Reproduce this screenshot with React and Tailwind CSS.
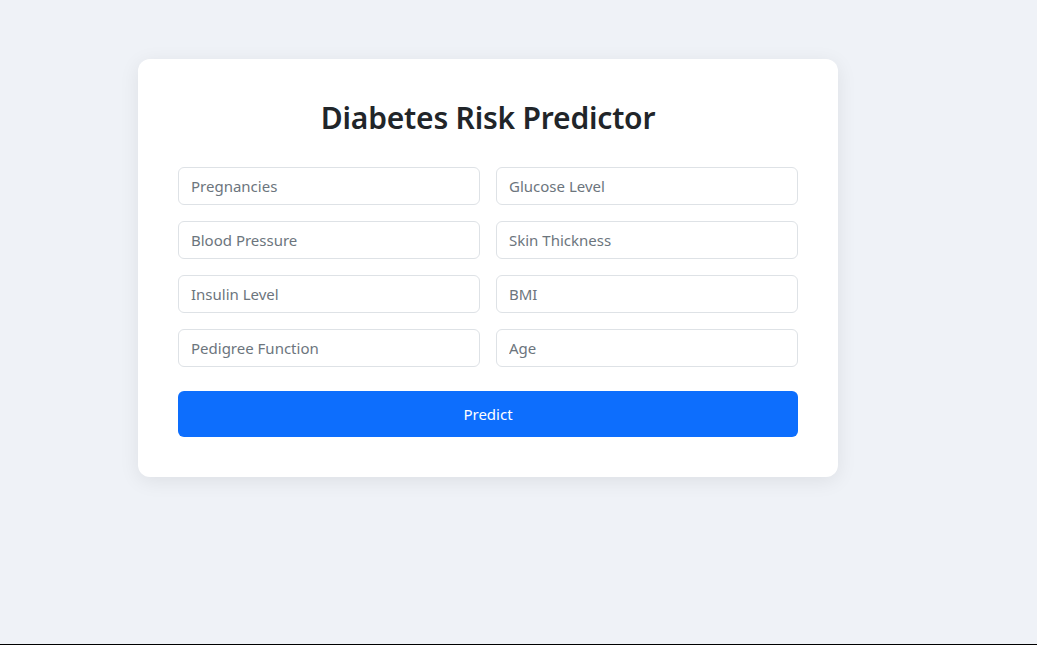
export default function App() {
  const fields = [
    "Pregnancies",
    "Glucose Level",
    "Blood Pressure",
    "Skin Thickness",
    "Insulin Level",
    "BMI",
    "Pedigree Function",
    "Age",
  ];
  return (
    <div
      className="h-[645px] w-full bg-[#eff2f7] border-b border-black overflow-hidden"
      style={{ fontFamily: '"Noto Sans", "Open Sans", sans-serif' }}
    >
      <div className="pt-[59px] pl-[138px]">
        <div className="w-[700px] rounded-xl bg-white p-10 shadow-[0_4px_20px_rgba(0,0,0,0.08)]">
          <h2 className="text-center text-[30px] leading-[38px] font-semibold tracking-[-0.2px] text-[#212529] mb-[30px] pt-[2px] -mt-[2px]">
            Diabetes Risk Predictor
          </h2>
          <div className="grid grid-cols-2 gap-x-4 gap-y-4">
            {fields.map((f) => (
              <input
                key={f}
                placeholder={f}
                className="h-[38px] w-full rounded-md border border-[#dee2e6] bg-white px-3 text-[15px] text-[#212529] placeholder:text-[#6c757d] outline-none"
              />
            ))}
          </div>
          <button className="mt-6 h-[46px] w-full rounded-md bg-[#0d6efd] text-[15px] text-white">
            Predict
          </button>
        </div>
      </div>
    </div>
  );
}
